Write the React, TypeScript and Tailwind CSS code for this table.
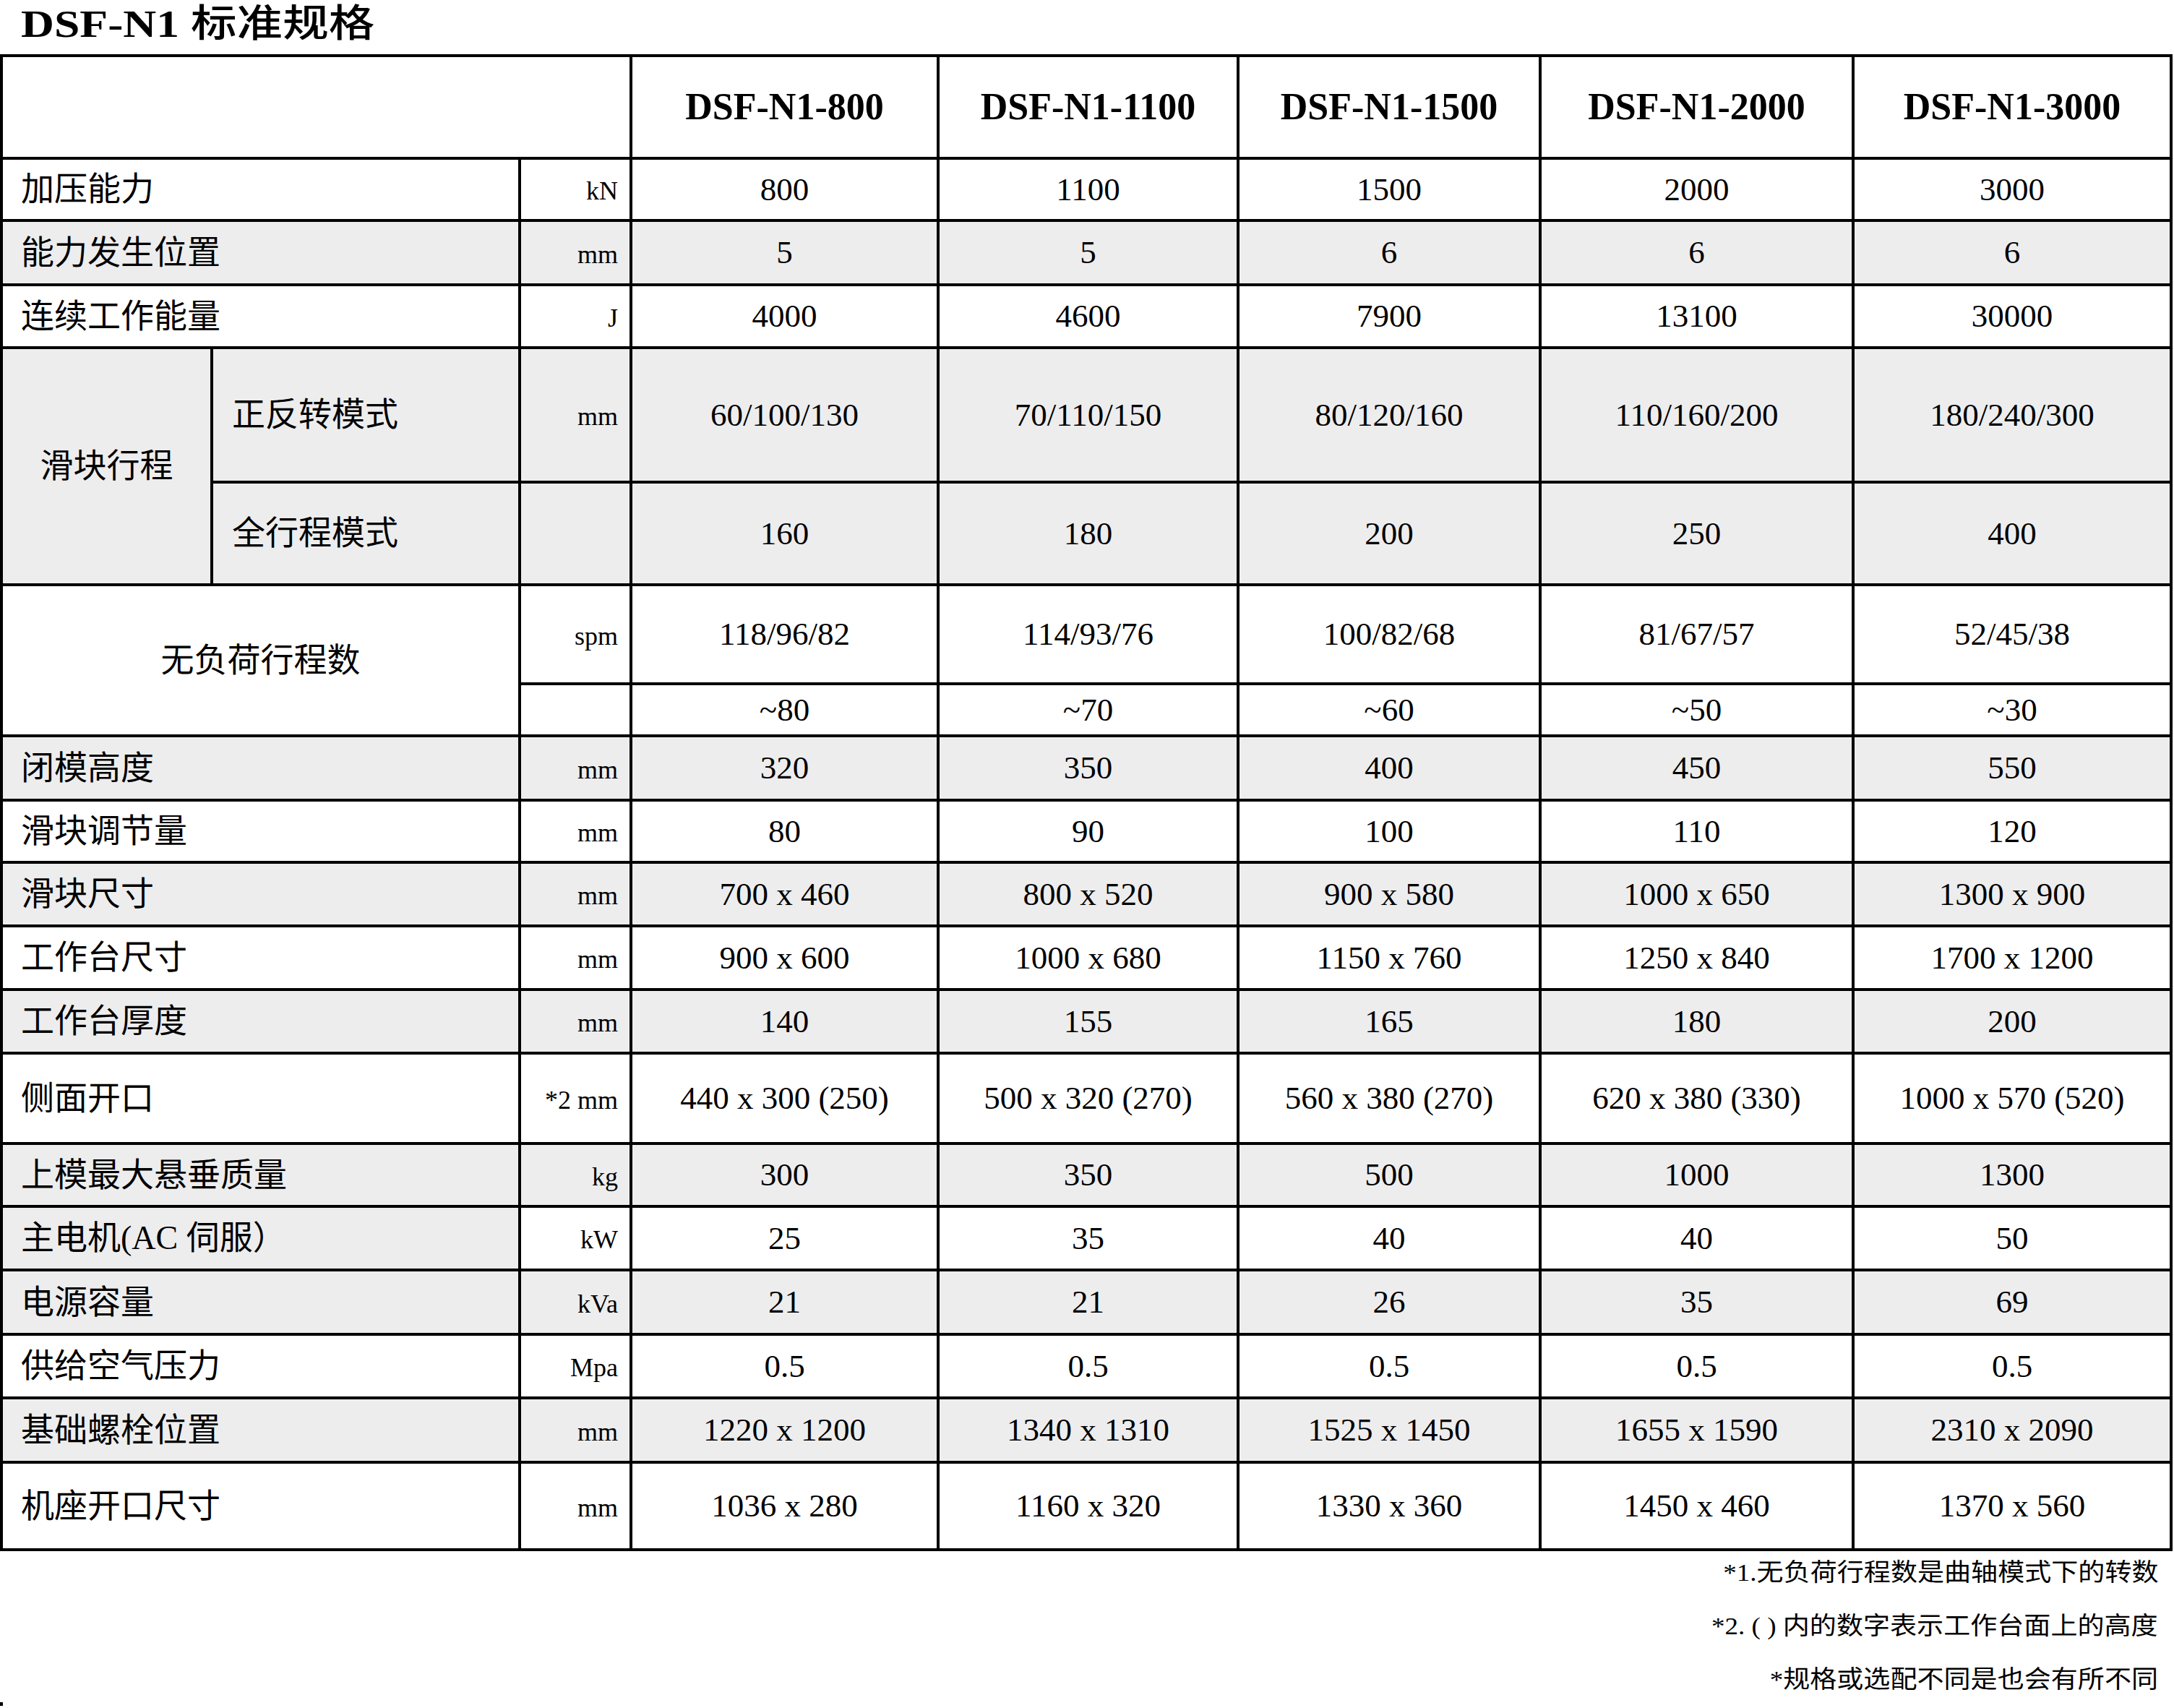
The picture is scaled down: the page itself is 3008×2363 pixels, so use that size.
import React from "react";

const MODELS = ["DSF-N1-800", "DSF-N1-1100", "DSF-N1-1500", "DSF-N1-2000", "DSF-N1-3000"];

type Row = {
  label: string;
  unit: string;
  values: string[];
  gray?: boolean;
  labelGray?: boolean;
};

const TOP_ROWS: Row[] = [
  { label: "加压能力", unit: "kN", values: ["800", "1100", "1500", "2000", "3000"] },
  { label: "能力发生位置", unit: "mm", values: ["5", "5", "6", "6", "6"], gray: true },
  { label: "连续工作能量", unit: "J", values: ["4000", "4600", "7900", "13100", "30000"] },
];

const STROKE = {
  forward: ["60/100/130", "70/110/150", "80/120/160", "110/160/200", "180/240/300"],
  full: ["160", "180", "200", "250", "400"],
};

const SPM = {
  crank: ["118/96/82", "114/93/76", "100/82/68", "81/67/57", "52/45/38"],
  max: ["~80", "~70", "~60", "~50", "~30"],
};

const BOTTOM_ROWS: Row[] = [
  { label: "闭模高度", unit: "mm", values: ["320", "350", "400", "450", "550"], gray: true },
  { label: "滑块调节量", unit: "mm", values: ["80", "90", "100", "110", "120"] },
  { label: "滑块尺寸", unit: "mm", values: ["700 x 460", "800 x 520", "900 x 580", "1000 x 650", "1300 x 900"], gray: true },
  { label: "工作台尺寸", unit: "mm", values: ["900 x 600", "1000 x 680", "1150 x 760", "1250 x 840", "1700 x 1200"] },
  { label: "工作台厚度", unit: "mm", values: ["140", "155", "165", "180", "200"], gray: true },
  { label: "侧面开口", unit: "*2 mm", values: ["440 x 300 (250)", "500 x 320 (270)", "560 x 380 (270)", "620 x 380 (330)", "1000 x 570 (520)"] },
  { label: "上模最大悬垂质量", unit: "kg", values: ["300", "350", "500", "1000", "1300"], gray: true },
  { label: "主电机(AC 伺服）", unit: "kW", values: ["25", "35", "40", "40", "50"], labelGray: true },
  { label: "电源容量", unit: "kVa", values: ["21", "21", "26", "35", "69"], gray: true },
  { label: "供给空气压力", unit: "Mpa", values: ["0.5", "0.5", "0.5", "0.5", "0.5"] },
  { label: "基础螺栓位置", unit: "mm", values: ["1220 x 1200", "1340 x 1310", "1525 x 1450", "1655 x 1590", "2310 x 2090"], gray: true },
  { label: "机座开口尺寸", unit: "mm", values: ["1036 x 280", "1160 x 320", "1330 x 360", "1450 x 460", "1370 x 560"] },
];

function bg(gray?: boolean) {
  return gray ? "bg-[#ededee]" : "bg-white";
}

function Unit({ text, gray }: { text: string; gray?: boolean }) {
  return (
    <div className={`${bg(gray)} flex items-center justify-end pr-[16px] pt-[4px] text-[36px] leading-none`}>
      {text}
    </div>
  );
}

function Values({ values, gray }: { values: string[]; gray?: boolean }) {
  return (
    <>
      {values.map((v, i) => (
        <div key={i} className={`${bg(gray)} flex items-center justify-center text-[45px] leading-none`}>
          {v}
        </div>
      ))}
    </>
  );
}

function PlainRow({ row }: { row: Row }) {
  const labelGray = row.gray || row.labelGray;
  return (
    <>
      <div className={`${bg(labelGray)} col-span-2 flex items-center pl-[25px] text-[46px] leading-none`}>
        {row.label}
      </div>
      <Unit text={row.unit} gray={row.gray} />
      <Values values={row.values} gray={row.gray} />
    </>
  );
}

export default function App() {
  return (
    <div className="w-[3008px] bg-white text-black font-['Liberation_Serif','Noto_Sans_CJK_SC',serif]">
      {/* 标题 */}
      <div className="h-[75px] flex items-center pl-[29px] pb-[8px]">
        <div className="origin-left scale-x-[1.2] text-[53px] leading-none whitespace-nowrap">
          <span className="font-bold">DSF-N1 </span>
          <span className="font-medium">标准规格</span>
        </div>
      </div>

      {/* 规格表 */}
      <div className="w-[3006px] bg-black p-[4px] gap-[4px] grid grid-cols-[287px_422px_150px_421px_411px_414px_429px_436px] grid-rows-[138px_82px_85px_83px_182px_138px_133px_68px_85px_82px_84px_84px_84px_121px_83px_84px_85px_84px_85px_117px]">
        <div className="col-span-3 bg-white" />
        {MODELS.map((m) => (
          <div key={m} className="bg-white flex items-center justify-center text-[52px] font-bold leading-none">
            {m}
          </div>
        ))}

        {TOP_ROWS.map((r) => (
          <PlainRow key={r.label} row={r} />
        ))}

        {/* 滑块行程 */}
        <div className="row-span-2 bg-[#ededee] flex items-center justify-center text-[46px] leading-none">
          滑块行程
        </div>
        <div className="bg-[#ededee] flex items-center pl-[26px] text-[46px] leading-none">正反转模式</div>
        <Unit text="mm" gray />
        <Values values={STROKE.forward} gray />
        <div className="bg-[#ededee] flex items-center pl-[26px] text-[46px] leading-none">全行程模式</div>
        <Unit text="" gray />
        <Values values={STROKE.full} gray />

        {/* 无负荷行程数 */}
        <div className="col-span-2 row-span-2 bg-white flex items-center justify-center text-[46px] leading-none">
          无负荷行程数
        </div>
        <Unit text="spm" />
        <Values values={SPM.crank} />
        <Unit text="" />
        <Values values={SPM.max} />

        {BOTTOM_ROWS.map((r) => (
          <PlainRow key={r.label} row={r} />
        ))}
      </div>

      {/* 注释 */}
      <div className="flex flex-col items-end gap-[36px] pt-[11px] pr-[22px]">
        <div className="origin-right scale-x-[1.09] text-[34px] leading-[38px] whitespace-nowrap">*1.无负荷行程数是曲轴模式下的转数</div>
        <div className="origin-right scale-x-[1.09] text-[34px] leading-[38px] whitespace-nowrap">*2. ( ) 内的数字表示工作台面上的高度</div>
        <div className="origin-right scale-x-[1.09] text-[34px] leading-[38px] whitespace-nowrap">*规格或选配不同是也会有所不同</div>
      </div>
      <div className="mt-[12px] w-[4px] h-[5px] bg-black" />
    </div>
  );
}
